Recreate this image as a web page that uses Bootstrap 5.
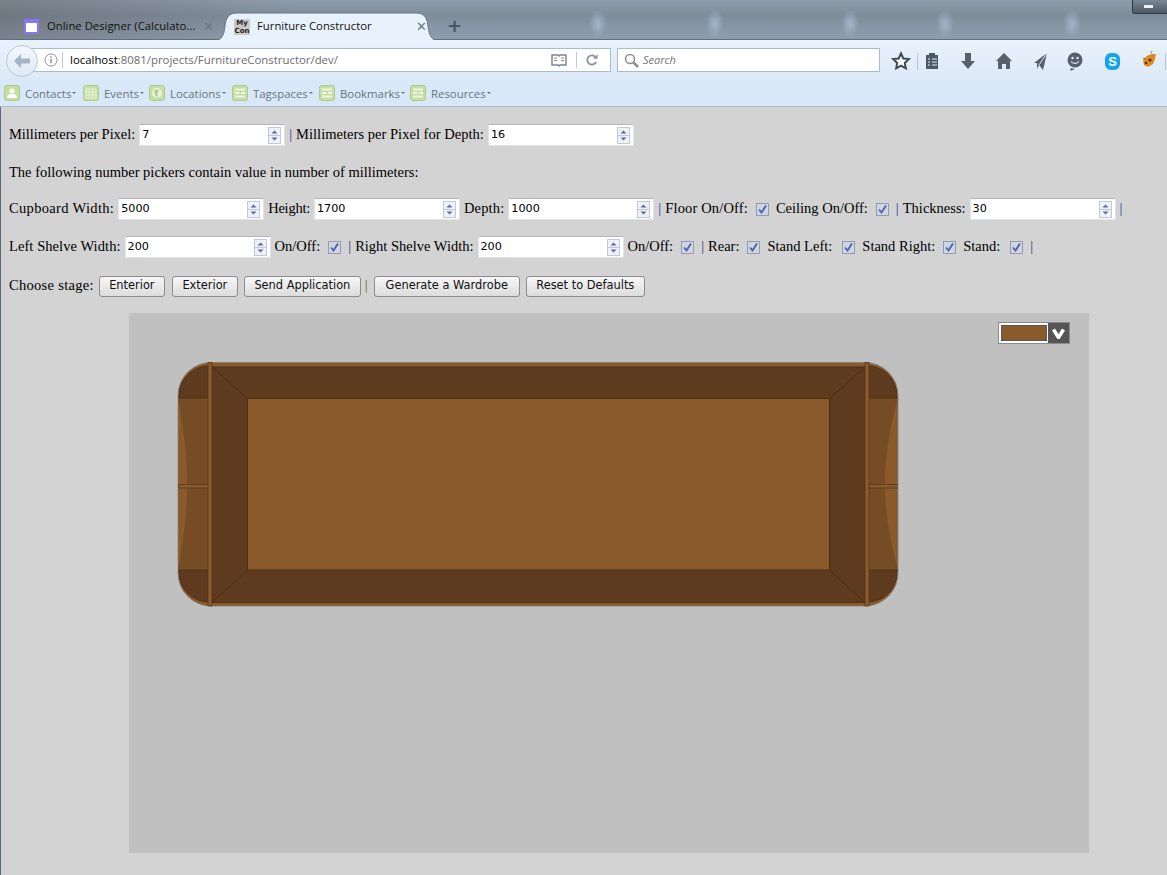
<!DOCTYPE html>
<html lang="en">
<head>
  <meta charset="UTF-8" />
  <title>Furniture Constructor</title>
  <link href="https://cdn.jsdelivr.net/npm/bootstrap@5.3.0/dist/css/bootstrap.min.css" rel="stylesheet">
  <style>
    html, body { height: 100%; }
    body { background: #d3d3d3; font-family: "Liberation Serif", serif; font-size: 14.5px; color: #000; overflow: hidden; box-shadow: inset 1px 0 0 #5a6a7a; }

    /* browser chrome */
    .titlebar { height: 40px; position: relative; padding: 12px 0 0 18px;
      background:
        radial-gradient(ellipse 9px 14px at 598px 24px, #a3b5ca 0, transparent 100%),
        radial-gradient(ellipse 9px 14px at 715px 24px, #a3b5ca 0, transparent 100%),
        radial-gradient(ellipse 9px 14px at 850px 24px, #a3b5ca 0, transparent 100%),
        radial-gradient(ellipse 9px 14px at 945px 24px, #a3b5ca 0, transparent 100%),
        radial-gradient(ellipse 9px 14px at 1072px 24px, #a3b5ca 0, transparent 100%),
        linear-gradient(90deg, rgba(80,80,80,.35) 0, rgba(80,80,80,0) 300px),
        linear-gradient(180deg, #8f9cab 0, #7f8d9b 40%, #8f9eae 100%);
      border-bottom: 1px solid #5f6f80; }
    .tabtext { font-family: "Open Sans", sans-serif; font-size: 11.3px; color: #111; white-space: nowrap; }
    .tab-off { width: 199px; height: 28px; padding: 0 3px 0 6px; }
    .tab-on { width: 227px; height: 29px; padding: 0 13px 0 21px; margin-left: -4px; position: relative; }
    .tab-on svg.tabshape { position: absolute; left: 0; top: 0; width: 100%; height: 100%; }
    .tab-on > :not(.tabshape) { position: relative; }
    .closex { color: #6d7780; font-weight: bold; font-size: 13px; line-height: 1; font-family: "DejaVu Sans", sans-serif; }
    .favicon-off { width: 15px; height: 15px; background: #fff; border: 2px solid #8878f0; border-top-width: 4px; display: block; }
    .favicon-on { width: 16px; height: 16px; margin-right: 7px; background: #c9c9c9; font-family: "DejaVu Sans", sans-serif; font-size: 7px; line-height: 8px; text-align: center; color: #222; font-weight: bold; }
    .plus-tab { color: #4a5661; font-size: 18px; line-height: 1; font-family: "DejaVu Sans", sans-serif; margin: 5px 0 0 7px; font-weight: bold; }
    .winbtn { position: absolute; right: 0; top: 0; width: 35px; height: 14px; background: linear-gradient(#7b8794, #4d5863); border: 1px solid #2f3944; border-top: 0; border-right: 0; border-bottom-left-radius: 3px; }
    .winbtn i { display: block; width: 9px; height: 3px; background: #eee; margin: 5px 0 0 11px; }

    .navrow { height: 40px; background: linear-gradient(#e9f2fc, #dde9f7); padding: 8px 0 0 20px; position: relative; }
    .backbtn { position: absolute; left: 6px; top: 5px; width: 32px; height: 32px; border-radius: 50%; background: linear-gradient(#f2f7fd, #dfeaf6); border: 1px solid #b9c8d8; }
    .urlbar { width: 591px; height: 24px; background: #fff; border: 1px solid #a9bdd2; border-left: 0; padding-left: 24px; padding-right: 12px; margin-right: 6px; font-family: "Open Sans", sans-serif; font-size: 11.4px; color: #6d6d6d; }
    .urlbar b { font-weight: 400; color: #000; }
    .vsep { width: 1px; height: 16px; background: #c3c9cf; }
    .vsep-info { margin: 0 7px 0 4px; }
    .vsep-reload { margin: 0 9px; }
    .searchbar { width: 263px; height: 24px; background: #fff; border: 1px solid #a9bdd2; padding-left: 6px; font-family: "Open Sans", sans-serif; font-size: 11px; font-style: italic; color: #777; }
    .tool-icons { position: absolute; left: 0; top: 0; }

    .bookrow { height: 27px; background: #d9e8f8; border-bottom: 1px solid #a9bacb; padding: 1px 0 0 4px; font-family: "Open Sans", sans-serif; font-size: 11.4px; color: #69747e; }
    .bookitem { display: flex; align-items: center; gap: 5px; white-space: nowrap; }
    .bookitem svg { width: 16px; height: 16px; }
    .bookitem u { text-decoration: none; display: block; width: 0; height: 0; border: 2px solid transparent; border-top: 2px solid #69747e; margin: 2px 0 0 -4px; }
    .bi-contacts { width: 79px; }
    .bi-events { width: 66px; }
    .bi-locations { width: 83px; }
    .bi-tagspaces { width: 87px; }
    .bi-bookmarks { width: 91px; }

    /* form rows */
    .pageform { padding: 9px 0 0 9px; }
    .pageform > div { white-space: nowrap; }
    .line-a { height: 38px; }
    .line-b { height: 37px; }
    .line-c { height: 36px; }
    .line-d { height: 40px; }
    .line-e { height: 38px; }
    .numbox { display: flex; width: 146px; height: 22px; background: #fff; border: 1px solid #dfe3ea; border-top-color: #b5b5b5; padding-left: 2px; font-family: "DejaVu Sans", sans-serif; font-size: 11.2px; align-items: center; }
    .numbox span { flex: 1; }
    .spinner { width: 13px; height: 17px; margin-right: 3px; }
    .sep { color: #2f3790; }
    .sep-olive { color: #66661f; }
    .chk { appearance: none; width: 13px; height: 13px; margin: 0 3px 0 4px; display: block; border: 1px solid #8f9db1;
      background: #cfd5e2 url("data:image/svg+xml,%3Csvg xmlns='http://www.w3.org/2000/svg' viewBox='0 0 13 13'%3E%3Cpath d='M3 6.500l2.500 3L10 2.500' fill='none' stroke='%234a5fa8' stroke-width='1.800'/%3E%3C/svg%3E") center/13px no-repeat; }
    .chk-wide { margin-left: 6px; }
    /* label fitting, the reference's hinted Times runs a bit wider or narrower per word */
    .t-mm { letter-spacing: -.05px; }
    .t-depth2 { letter-spacing: .03px; }
    .t-cup { letter-spacing: .33px; }
    .t-height { letter-spacing: -.25px; }
    .t-depth { letter-spacing: .15px; }
    .t-floor { letter-spacing: .15px; }
    .t-left { letter-spacing: .07px; }
    .t-stage { letter-spacing: .3px; }
    .stagebtn { font-family: "DejaVu Sans", sans-serif; font-size: 11.4px; line-height: 1; height: 21px; padding: 0; color: #111; background: linear-gradient(#f7f7f7, #dcdcdc); border: 1px solid #8c8c8c; border-radius: 3px; }
    .w-ent { width: 66px; margin-left: 1px; }
    .w-ext { width: 66px; margin-left: 3px; }
    .w-send { width: 117px; margin-left: 2px; }
    .w-gen { width: 146px; margin-left: 2px; }
    .w-reset { width: 119px; margin-left: 2px; }

    /* drawing board */
    .board { width: 960px; height: 540px; margin: 8px 0 0 129px; background: #c0c0c0; position: relative; }
    .board svg.furn { display: block; width: 960px; height: 540px; }
    .colorpick { position: absolute; left: 869px; top: 9px; width: 72px; height: 22px; background: #fff; border: 1px solid #8a8a8a; }
    .colorpick .swatch { width: 46px; height: 16px; margin: 2px 0 0 2px; background: #8b5a2b; border: 1px solid #555; }
    .colorpick .arrowbox { width: 21px; background: #555; }
  </style>
</head>
<body>
  <div class="titlebar d-flex align-items-start">
    <div class="tab-off d-flex align-items-center gap-2 tabtext">
      <span class="favicon-off flex-shrink-0"></span>
      <span class="flex-grow-1">Online Designer (Calculato...</span>
      <span class="closex">✕</span>
    </div>
    <div class="tab-on d-flex align-items-center tabtext">
      <svg class="tabshape" viewBox="0 0 227 29" preserveAspectRatio="none"><path d="M0 29C8 29 11 24 12 14 13 5 16 1 24 1H203C211 1 214 5 215 14 216 24 219 29 227 29Z" fill="#e8f2fc" stroke="#66758a"/></svg>
      <span class="favicon-on flex-shrink-0">My<br>Con</span>
      <span class="flex-grow-1">Furniture Constructor</span>
      <span class="closex">✕</span>
    </div>
    <span class="plus-tab">+</span>
    <div class="winbtn"><i></i></div>
  </div>

  <div class="navrow d-flex align-items-start">
    <div class="backbtn d-flex align-items-center justify-content-center">
      <svg width="18" height="16" viewBox="0 0 18 16"><path d="M8 1L1 8l7 7V10.500h9v-5H8z" fill="#a5b4c4"/></svg>
    </div>
    <div class="urlbar d-flex align-items-center">
      <svg class="flex-shrink-0" width="14" height="14" viewBox="0 0 15 15"><circle cx="7.500" cy="7.500" r="6.500" fill="none" stroke="#8a8a8a"/><path d="M7.500 6.500v4.500M7.500 3.500v1.500" stroke="#8a8a8a" stroke-width="1.500"/></svg>
      <span class="vsep vsep-info flex-shrink-0"></span>
      <span class="flex-grow-1"><b>localhost</b>:8081/projects/FurnitureConstructor/dev/</span>
      <svg class="flex-shrink-0" width="16" height="15" viewBox="0 0 16 15"><path d="M1 2h6l1 1 1-1h6v10H9l-1 1-1-1H1z" fill="#fff" stroke="#7c8790" stroke-width="1.500"/><path d="M3 5h3M3 7.500h3M10 5h3M10 7.500h3" stroke="#7c8790"/></svg>
      <span class="vsep vsep-reload flex-shrink-0"></span>
      <svg class="flex-shrink-0" width="12" height="14" viewBox="0 0 13 14"><path d="M10.500 4A5 5 0 1 0 11 9" fill="none" stroke="#8594a3" stroke-width="2"/><path d="M7.500 5l5 1V1z" fill="#8594a3"/></svg>
    </div>
    <div class="searchbar d-flex align-items-center gap-1">
      <svg width="15" height="15" viewBox="0 0 15 15"><circle cx="6" cy="6" r="4.500" fill="none" stroke="#8d8d8d" stroke-width="1.500"/><path d="M9.500 9.500L14 14" stroke="#8d8d8d" stroke-width="2.500"/></svg>
      <span>Search</span>
    </div>
    <svg class="tool-icons" width="1167" height="40" viewBox="0 0 1167 40">
      <path d="M901 13.500l2.300 5 5.500.6-4 3.800 1 5.400-4.800-2.700-4.800 2.700 1-5.400-4-3.800 5.500-.6z" fill="#fff" stroke="#3e4a57" stroke-width="2"/>
      <path d="M917.500 13v17" stroke="#b9c5d2"/>
      <path d="M926 15h3v-2h6v2h3v14h-12z" fill="#4b5866"/><path d="M928 19h2M932 19h5M928 22h2M932 22h5M928 25h2M932 25h5" stroke="#e6eef8"/>
      <path d="M965 13h6v8h4l-7 8-7-8h4z" fill="#56616e"/>
      <path d="M1004 13l8 8h-2v8h-4v-5h-4v5h-4v-8h-2z" fill="#56616e"/>
      <path d="M1047 13l-4 17-4-5-2 4v-6l-3 0z" fill="#56616e"/><path d="M1047 13l-8 12" stroke="#dfe9f5"/>
      <circle cx="1075" cy="20" r="7.500" fill="#56616e"/><path d="M1071 28l-1 3 5-2z" fill="#56616e"/><circle cx="1072.500" cy="18" r="1.200" fill="#e6eef8"/><circle cx="1077.500" cy="18" r="1.200" fill="#e6eef8"/><path d="M1071 21.500c2 2.500 6 2.500 8 0" fill="none" stroke="#e6eef8" stroke-width="1.200"/>
      <rect x="1105" y="13" width="15" height="17" rx="6" fill="#12a5ea"/><text x="1112.500" y="26" text-anchor="middle" font-family="Liberation Sans" font-weight="700" font-size="13" fill="#fff">S</text>
      <path d="M1143 20l4-4 4-2 5 0-1 5-2 5-5 3-4-2z" fill="#e08a1e"/><circle cx="1150" cy="20" r="1.500" fill="#4a2a0a"/><circle cx="1146" cy="23" r="1.200" fill="#4a2a0a"/><path d="M1143 18l3 1M1151 13l1-2" stroke="#777"/>
      <path d="M1165.500 13v17" stroke="#b9c5d2"/>
    </svg>
  </div>

  <div class="bookrow d-flex align-items-center">
    <span class="bookitem bi-contacts">
      <svg viewBox="0 0 16 16"><rect x=".5" y=".5" width="15" height="15" rx="2" fill="#c4dea4" stroke="#aecb8b"/><circle cx="8" cy="6" r="2.500" fill="#fff"/><path d="M3 13c0-3 2-4 5-4s5 1 5 4z" fill="#fff"/></svg>
      <span>Contacts</span><u></u>
    </span>
    <span class="bookitem bi-events">
      <svg viewBox="0 0 16 16"><rect x=".5" y=".5" width="15" height="15" rx="2" fill="#c4dea4" stroke="#aecb8b"/><path d="M3 4h10v9H3zM3 7h10M3 10h10M6.300 4v9M9.600 4v9" fill="none" stroke="#e9f3dc"/></svg>
      <span>Events</span><u></u>
    </span>
    <span class="bookitem bi-locations">
      <svg viewBox="0 0 16 16"><rect x=".5" y=".5" width="15" height="15" rx="2" fill="#c4dea4" stroke="#aecb8b"/><circle cx="8" cy="8" r="5" fill="#e9f3dc"/><path d="M5 6l3-2 2 2-2 2 1 3-2 1-1-3z" fill="#aecb8b"/></svg>
      <span>Locations</span><u></u>
    </span>
    <span class="bookitem bi-tagspaces">
      <svg viewBox="0 0 16 16"><rect x=".5" y=".5" width="15" height="15" rx="2" fill="#c4dea4" stroke="#aecb8b"/><path d="M3 4.500h10M3 8h4.500M9 8h4M3 11.500h10" stroke="#eef6e2" stroke-width="2"/></svg>
      <span>Tagspaces</span><u></u>
    </span>
    <span class="bookitem bi-bookmarks">
      <svg viewBox="0 0 16 16"><rect x=".5" y=".5" width="15" height="15" rx="2" fill="#c4dea4" stroke="#aecb8b"/><path d="M3 4.500h10M3 8h4.500M9 8h4M3 11.500h10" stroke="#eef6e2" stroke-width="2"/></svg>
      <span>Bookmarks</span><u></u>
    </span>
    <span class="bookitem">
      <svg viewBox="0 0 16 16"><rect x=".5" y=".5" width="15" height="15" rx="2" fill="#c4dea4" stroke="#aecb8b"/><path d="M3 4.500h10M3 8h4.500M9 8h4M3 11.500h10" stroke="#eef6e2" stroke-width="2"/></svg>
      <span>Resources</span><u></u>
    </span>
  </div>

  <div class="pageform">
    <div class="line-a d-flex align-items-center gap-1">
      <span class="t-mm">Millimeters per Pixel:</span>
      <span class="numbox"><span>7</span><svg class="spinner"><use href="#spin"/></svg></span>
      <span class="sep">|</span>
      <span class="t-depth2">Millimeters per Pixel for Depth:</span>
      <span class="numbox"><span>16</span><svg class="spinner"><use href="#spin"/></svg></span>
    </div>
    <div class="line-b d-flex align-items-center">The following number pickers contain value in number of millimeters:</div>
    <div class="line-c d-flex align-items-center gap-1">
      <span class="t-cup">Cupboard Width:</span>
      <span class="numbox"><span>5000</span><svg class="spinner"><use href="#spin"/></svg></span>
      <span class="t-height">Height:</span>
      <span class="numbox"><span>1700</span><svg class="spinner"><use href="#spin"/></svg></span>
      <span class="t-depth">Depth:</span>
      <span class="numbox"><span>1000</span><svg class="spinner"><use href="#spin"/></svg></span>
      <span class="sep">|</span>
      <span class="t-floor">Floor On/Off:</span>
      <input class="chk" type="checkbox" checked>
      <span>Ceiling On/Off:</span>
      <input class="chk" type="checkbox" checked>
      <span class="sep">|</span>
      <span>Thickness:</span>
      <span class="numbox"><span>30</span><svg class="spinner"><use href="#spin"/></svg></span>
      <span class="sep">|</span>
    </div>
    <div class="line-d d-flex align-items-center gap-1">
      <span class="t-left">Left Shelve Width:</span>
      <span class="numbox"><span>200</span><svg class="spinner"><use href="#spin"/></svg></span>
      <span>On/Off:</span>
      <input class="chk" type="checkbox" checked>
      <span class="sep">|</span>
      <span>Right Shelve Width:</span>
      <span class="numbox"><span>200</span><svg class="spinner"><use href="#spin"/></svg></span>
      <span>On/Off:</span>
      <input class="chk" type="checkbox" checked>
      <span class="sep">|</span>
      <span>Rear:</span>
      <input class="chk" type="checkbox" checked>
      <span>Stand Left:</span>
      <input class="chk chk-wide" type="checkbox" checked>
      <span>Stand Right:</span>
      <input class="chk" type="checkbox" checked>
      <span>Stand:</span>
      <input class="chk chk-wide" type="checkbox" checked>
      <span class="sep">|</span>
    </div>
    <div class="line-e d-flex align-items-center gap-1">
      <span class="t-stage">Choose stage:</span>
      <button class="btn stagebtn w-ent">Enterior</button>
      <button class="btn stagebtn w-ext">Exterior</button>
      <button class="btn stagebtn w-send">Send Application</button>
      <span class="sep-olive">|</span>
      <button class="btn stagebtn w-gen">Generate a Wardrobe</button>
      <button class="btn stagebtn w-reset">Reset to Defaults</button>
    </div>
  </div>

  <div class="board">
    <svg class="furn" viewBox="129 313 960 540">
      <defs><clipPath id="outerclip"><rect x="178" y="362.500" width="720" height="243.500" rx="33"/></clipPath></defs>
      <g clip-path="url(#outerclip)">
        <rect x="178" y="362" width="720" height="244" fill="#8b5a2b"/>
        <!-- left wing -->
        <rect x="178" y="398" width="30" height="172" fill="#754c24"/>
        <path d="M178 398c5 30 9 55 9 86s-4 56-9 86z" fill="#8b5a2b"/>
        <path d="M179 398v-2c0-16 12-29 29-30v32zM179 570v2c0 16 12 29 29 30v-32z" fill="#5e3b1e" stroke="#4a2f16" stroke-width=".8"/>
        <rect x="178.500" y="484.500" width="30" height="3.500" fill="#8b5a2b" stroke="#5e3b1e"/>
        <!-- right wing -->
        <rect x="869" y="398" width="29" height="172" fill="#754c24"/>
        <path d="M898 398c-8 30-13 55-13 86s5 56 13 86z" fill="#8b5a2b"/>
        <path d="M897 398v-2c0-16-12-29-28-30v32zM897 570v2c0 16-12 29-28 30v-32z" fill="#5e3b1e" stroke="#4a2f16" stroke-width=".8"/>
        <rect x="869" y="484.500" width="29" height="3.500" fill="#8b5a2b" stroke="#5e3b1e"/>
      </g>
      <rect x="178" y="362.500" width="720" height="243.500" rx="33" fill="none" stroke="#7a7a7a" stroke-opacity=".7"/>
      <!-- carcass -->
      <rect x="212" y="367" width="653" height="235.500" fill="#5e3b1e" stroke="#4a2f16"/>
      <rect x="247.500" y="398.500" width="582" height="171.500" fill="#8b5a2b" stroke="#4a2f16"/>
      <path d="M212 367l35.500 31.500M865 367l-35.500 31.500M212 602.500l35.500-32.500M865 602.500l-35.500-32.500" stroke="#4a2f16"/>
      <rect x="208" y="362.500" width="4" height="243.500" fill="#8b5a2b" stroke="#5e3b1e" stroke-width=".8"/>
      <rect x="865" y="362.500" width="4" height="243.500" fill="#8b5a2b" stroke="#5e3b1e" stroke-width=".8"/>
    </svg>
    <div class="colorpick d-flex">
      <div class="swatch flex-shrink-0"></div>
      <div class="arrowbox ms-auto d-flex align-items-center justify-content-center">
        <svg width="13" height="11" viewBox="0 0 13 11"><path d="M1.500 1.500l5 8 5-8" fill="none" stroke="#fff" stroke-width="3.500"/></svg>
      </div>
    </div>
  </div>

  <svg width="0" height="0" class="d-block">
    <defs>
      <g id="spin">
        <rect x=".5" y=".5" width="12" height="16" fill="#eef1f6" stroke="#c2c9d6"/>
        <path d="M.5 8.500h12" stroke="#c2c9d6"/>
        <path d="M6.500 3.500l3 3h-6z" fill="#5a6aa8"/>
        <path d="M6.500 13.500l3-3h-6z" fill="#5a6aa8"/>
      </g>
    </defs>
  </svg>
</body>
</html>
